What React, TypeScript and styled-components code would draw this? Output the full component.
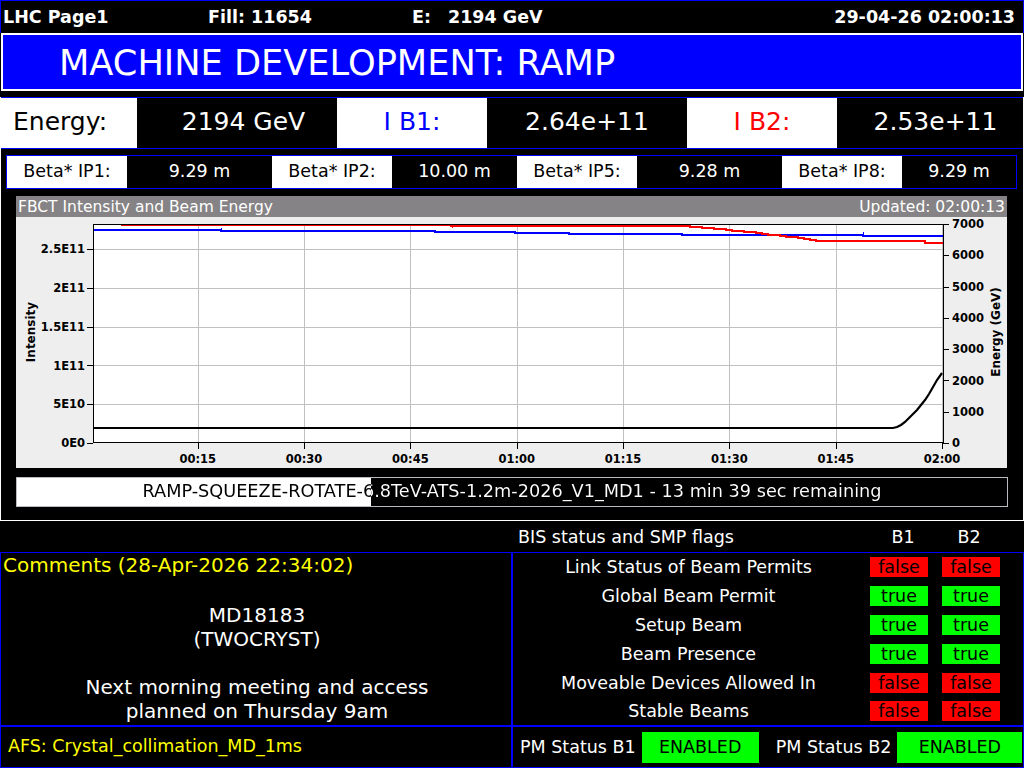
import React from "react";
import styled, { createGlobalStyle } from "styled-components";

const BLUE = "#0000ff";
const RED = "#ff0000";
const GREEN = "#00ff00";
const YELLOW = "#ffff00";

const GlobalStyle = createGlobalStyle`
  html, body { margin: 0; padding: 0; background: #000; }
  #root { width: 1024px; height: 768px; }
  *, *::before, *::after { box-sizing: border-box; }
`;

const Screen = styled.div`
  width: 1024px;
  height: 768px;
  overflow: hidden;
  background: #000;
  color: #fff;
  font-family: "DejaVu Sans", "Liberation Sans", sans-serif;
  font-size: 17.5px;
  display: flex;
  flex-direction: column;
  white-space: nowrap;
`;

/* ---------- top status line ---------- */
const TopBar = styled.header`
  flex: none;
  height: 33px;
  border: 1px solid ${BLUE};
  border-bottom: none;
  padding: 0 8px 0 2px;
  display: flex;
  align-items: center;
  font-weight: bold;
`;

const TopItem = styled.span<{ $w?: number }>`
  flex: none;
  width: ${(p) => (p.$w ? `${p.$w}px` : "auto")};
`;

const TopClock = styled.span`
  margin-left: auto;
`;

/* ---------- mode title ---------- */
const TitleBar = styled.h1`
  flex: none;
  margin: 0 1px 6px;
  height: 58px;
  border: 2px solid #fff;
  background: ${BLUE};
  display: flex;
  align-items: center;
  padding-left: 56px;
  font-size: 35.2px;
  font-weight: normal;
`;

/* ---------- main beam panel ---------- */
const MainPanel = styled.section`
  flex: none;
  height: 424px;
  border: 1px solid #fff;
  border-top: none;
  display: flex;
  flex-direction: column;
`;

const EnergyRow = styled.div`
  flex: none;
  height: 52px;
  border-top: 1px solid ${BLUE};
  border-bottom: 1px solid ${BLUE};
  display: flex;
  font-size: 25px;
`;

const EnergyCell = styled.div<{
  $w?: number;
  $light?: boolean;
  $color?: string;
  $left?: boolean;
  $pad?: number;
}>`
  flex: ${(p) => (p.$w ? `0 0 ${p.$w}px` : "1 1 auto")};
  background: ${(p) => (p.$light ? "#fff" : "#000")};
  color: ${(p) => p.$color ?? "#fff"};
  display: flex;
  align-items: center;
  justify-content: ${(p) => (p.$left ? "flex-start" : "center")};
  padding: 0 0 3px ${(p) => p.$pad ?? 0}px;
`;

const BetaRow = styled.div`
  flex: none;
  height: 34px;
  margin: 6px 6px 0 5px;
  border: 1px solid ${BLUE};
  display: flex;
`;

const BetaCell = styled.div<{ $w?: number; $light?: boolean }>`
  flex: ${(p) => (p.$w ? `0 0 ${p.$w}px` : "1 1 auto")};
  background: ${(p) => (p.$light ? "#fff" : "#000")};
  color: ${(p) => (p.$light ? "#000" : "#fff")};
  display: flex;
  align-items: center;
  justify-content: center;
  padding-bottom: 2px;
`;

const ChartPanel = styled.div`
  flex: none;
  width: 991px;
  height: 272px;
  margin: 7px 0 0 15px;
  background: #eeeeee;
  display: flex;
  flex-direction: column;
`;

const ChartHeader = styled.div`
  flex: none;
  height: 21px;
  background: #858385;
  color: #fff;
  font-size: 15.5px;
  display: flex;
  align-items: center;
  justify-content: space-between;
  padding: 0 2px;
`;

const ChartSvg = styled.svg`
  display: block;
  flex: none;
`;

/* sequence progress: white fill on black, text inverted across the fill edge */
const Progress = styled.div<{ $fill: number }>`
  flex: none;
  width: 992px;
  height: 30px;
  margin: 9px 0 0 15px;
  border: 1px solid #b8bcc0;
  background: linear-gradient(
    to right,
    #fff ${(p) => p.$fill}px,
    #000 ${(p) => p.$fill}px
  );
`;

const ProgressText = styled.div<{ $fill: number }>`
  width: 990px;
  height: 28px;
  line-height: 27px;
  text-align: center;
  font-size: 17.7px;
  color: transparent;
  background: linear-gradient(
    to right,
    #000 ${(p) => p.$fill}px,
    #fff ${(p) => p.$fill}px
  );
  -webkit-background-clip: text;
  background-clip: text;
`;

/* ---------- BIS / comments area ---------- */
const BisHeader = styled.div`
  flex: none;
  height: 31px;
  display: grid;
  grid-template-columns: 512px 1fr;
  align-items: center;
`;

const BisHeading = styled.div`
  display: flex;
  align-items: center;
  padding: 0 35px 0 6px;
`;

const BisHeadingTitle = styled.span`
  flex: 1;
`;

const BeamHead = styled.span`
  flex: none;
  width: 40px;
  text-align: center;
  & + & {
    margin-left: 26px;
  }
`;

const Lower = styled.div`
  flex: none;
  display: grid;
  grid-template-columns: 512px 512px;
  grid-template-rows: 174px 42px;
`;

const Box = styled.div`
  border: 1px solid ${BLUE};
`;

const CommentsBox = styled(Box)`
  padding-left: 2px;
  font-size: 20px;
  line-height: 24px;
`;

const CommentsTitle = styled.div`
  color: ${YELLOW};
`;

const CommentsBody = styled.div`
  margin-top: 26px;
  text-align: center;
  white-space: pre;
`;

const BisBox = styled(Box)`
  display: grid;
  grid-template-rows: repeat(6, 28.8px);
`;

const BisRow = styled.div`
  display: flex;
  align-items: center;
`;

const BisLabel = styled.span`
  flex: none;
  width: 351px;
  text-align: center;
`;

const Flag = styled.span<{ $on: boolean }>`
  flex: none;
  width: 58px;
  height: 20px;
  margin-left: 6px;
  background: ${(p) => (p.$on ? GREEN : RED)};
  color: #000;
  line-height: 20px;
  text-align: center;
  & + & {
    margin-left: 14px;
  }
`;

const AfsBox = styled(Box)`
  display: flex;
  align-items: center;
  padding: 0 0 3px 7px;
  color: ${YELLOW};
`;

const PmBox = styled(Box)`
  display: flex;
  align-items: center;
  padding-left: 7px;
`;

const PmLabel = styled.span<{ $gap?: number }>`
  flex: none;
  margin: 0 6px 0 ${(p) => p.$gap ?? 0}px;
`;

const PmState = styled.span<{ $w: number }>`
  flex: none;
  width: ${(p) => p.$w}px;
  height: 31px;
  background: ${GREEN};
  color: #000;
  display: flex;
  align-items: center;
  justify-content: center;
`;

/* ---------- chart data ---------- */
const PLOT = { l: 93, r: 943, t: 224, b: 443 };
const timeTicks = ["00:15", "00:30", "00:45", "01:00", "01:15", "01:30", "01:45", "02:00"].map(
  (label, i) => ({ label, x: 197.7 + i * 106.33 })
);
const intensityTicks: { label: string; v: number }[] = [
  { label: "2.5E11", v: 2.5e11 },
  { label: "2E11", v: 2e11 },
  { label: "1.5E11", v: 1.5e11 },
  { label: "1E11", v: 1e11 },
  { label: "5E10", v: 5e10 },
  { label: "0E0", v: 0 },
];
const yIntensity = (v: number) => PLOT.b - (v / 5e10) * 38.8;
const yEnergy = (gev: number) => PLOT.b - (gev * (PLOT.b - PLOT.t)) / 7000;
const energyTicks = [0, 1000, 2000, 3000, 4000, 5000, 6000, 7000];

const pts = (list: number[][]) => list.map(([x, y]) => `${x},${y}`).join(" ");

const beam1 = pts([
  [93, 230], [221, 230], [221, 231], [435, 231], [435, 232], [515, 232], [515, 233],
  [569, 233], [569, 234], [682, 234], [682, 235], [863, 235], [863, 236], [943, 236],
]);

const beam2 = (() => {
  const list: number[][] = [[121, 225], [451, 225], [451, 226], [678, 226]];
  let prev = 226;
  for (let x = 684; x <= 823; x += 6) {
    const f = (x - 678) / 145;
    const y = Math.round(226 + 15.5 * Math.pow(f, 1.25));
    list.push([x, prev], [x, y]);
    prev = y;
  }
  list.push([925, prev], [925, 243], [943, 243]);
  return pts(list);
})();

const energyTrace = pts([
  [93, 428], [893, 428], [897, 427], [901, 425], [905, 422], [909, 418], [913, 414],
  [917, 410], [921, 405], [925, 400], [929, 394], [933, 387], [937, 380], [942, 373],
]);

const axisFont = {
  fontFamily: '"DejaVu Sans", sans-serif',
  fontSize: 11.5,
  fontWeight: 700,
  fill: "#000",
} as const;

const crisp = (n: number) => Math.round(n) + 0.5;

function IntensityChart() {
  return (
    <ChartSvg width={991} height={251} viewBox="16 217 991 251">
      <rect x={PLOT.l} y={PLOT.t} width={PLOT.r - PLOT.l} height={PLOT.b - PLOT.t} fill="#fff" />
      <g stroke="#c0c0c0" strokeWidth={1} shapeRendering="crispEdges">
        {timeTicks.map((t) => (
          <line key={t.label} x1={crisp(t.x)} x2={crisp(t.x)} y1={PLOT.t} y2={PLOT.b} />
        ))}
        {intensityTicks.slice(0, 5).map((t) => (
          <line key={t.label} x1={PLOT.l} x2={PLOT.r} y1={crisp(yIntensity(t.v))} y2={crisp(yIntensity(t.v))} />
        ))}
      </g>
      <g fill="none" strokeWidth={2} shapeRendering="crispEdges">
        <polyline points={beam1} stroke={BLUE} />
        <polyline points={beam2} stroke={RED} />
        <line x1={221} x2={221} y1={228} y2={232} stroke={BLUE} strokeWidth={1} />
        <line x1={863} x2={863} y1={232} y2={236} stroke={BLUE} strokeWidth={1} />
        <line x1={452} x2={452} y1={225} y2={228} stroke={RED} strokeWidth={1} />
      </g>
      <polyline points={energyTrace} fill="none" stroke="#000" strokeWidth={2.2} />
      <g stroke="#000" strokeWidth={1} shapeRendering="crispEdges" fill="none">
        <rect x={PLOT.l + 0.5} y={PLOT.t + 0.5} width={PLOT.r - PLOT.l} height={PLOT.b - PLOT.t - 1} />
        {intensityTicks.map((t) => (
          <line key={t.label} x1={87} x2={PLOT.l} y1={crisp(yIntensity(t.v))} y2={crisp(yIntensity(t.v))} />
        ))}
        {timeTicks.map((t) => (
          <line key={t.label} x1={crisp(t.x)} x2={crisp(t.x)} y1={PLOT.b} y2={PLOT.b + 6} />
        ))}
        {energyTicks.map((v) => (
          <line key={v} x1={PLOT.r} x2={PLOT.r + 6} y1={crisp(yEnergy(v))} y2={crisp(yEnergy(v))} />
        ))}
      </g>
      {intensityTicks.map((t) => (
        <text key={t.label} x={85} y={yIntensity(t.v) + 4.2} textAnchor="end" {...axisFont}>
          {t.label}
        </text>
      ))}
      {timeTicks.map((t) => (
        <text key={t.label} x={t.x} y={463} textAnchor="middle" {...axisFont}>
          {t.label}
        </text>
      ))}
      {energyTicks.map((v) => (
        <text key={v} x={952} y={yEnergy(v) + 4.2} {...axisFont}>
          {v}
        </text>
      ))}
      <text transform="translate(34.5 332) rotate(-90)" textAnchor="middle" {...axisFont} fontSize={12}>
        Intensity
      </text>
      <text transform="translate(1000 332) rotate(-90)" textAnchor="middle" {...axisFont} fontSize={12}>
        Energy (GeV)
      </text>
    </ChartSvg>
  );
}

const flags: { label: string; b1: boolean; b2: boolean }[] = [
  { label: "Link Status of Beam Permits", b1: false, b2: false },
  { label: "Global Beam Permit", b1: true, b2: true },
  { label: "Setup Beam", b1: true, b2: true },
  { label: "Beam Presence", b1: true, b2: true },
  { label: "Moveable Devices Allowed In", b1: false, b2: false },
  { label: "Stable Beams", b1: false, b2: false },
];

const betas = [
  { ip: "IP1", value: "9.29 m", w: 145 },
  { ip: "IP2", value: "10.00 m", w: 125 },
  { ip: "IP5", value: "9.28 m", w: 145 },
  { ip: "IP8", value: "9.29 m", w: 0 },
];

const sequence = "RAMP-SQUEEZE-ROTATE-6.8TeV-ATS-1.2m-2026_V1_MD1 - 13 min 39 sec remaining";
const sequenceDone = 0.358;
const sequenceFill = Math.round(sequenceDone * 990);

export default function App() {
  return (
    <Screen>
      <GlobalStyle />
      <TopBar>
        <TopItem $w={205}>LHC Page1</TopItem>
        <TopItem $w={204}>Fill: 11654</TopItem>
        <TopItem $w={36}>E:</TopItem>
        <TopItem>2194 GeV</TopItem>
        <TopClock>29-04-26 02:00:13</TopClock>
      </TopBar>

      <TitleBar>MACHINE DEVELOPMENT: RAMP</TitleBar>

      <MainPanel>
        <EnergyRow>
          <EnergyCell $w={136} $light $color="#000" $left $pad={12}>
            Energy:
          </EnergyCell>
          <EnergyCell $w={200} $pad={13}>
            2194 GeV
          </EnergyCell>
          <EnergyCell $w={150} $light $color={BLUE}>
            I B1:
          </EnergyCell>
          <EnergyCell $w={200}>2.64e+11</EnergyCell>
          <EnergyCell $w={150} $light $color={RED}>
            I B2:
          </EnergyCell>
          <EnergyCell $pad={11}>2.53e+11</EnergyCell>
        </EnergyRow>

        <BetaRow>
          {betas.map((b) => (
            <React.Fragment key={b.ip}>
              <BetaCell $w={120} $light>
                Beta* {b.ip}:
              </BetaCell>
              <BetaCell $w={b.w || undefined}>{b.value}</BetaCell>
            </React.Fragment>
          ))}
        </BetaRow>

        <ChartPanel>
          <ChartHeader>
            <span>FBCT Intensity and Beam Energy</span>
            <span>Updated: 02:00:13</span>
          </ChartHeader>
          <IntensityChart />
        </ChartPanel>

        <Progress $fill={sequenceFill}>
          <ProgressText $fill={sequenceFill}>{sequence}</ProgressText>
        </Progress>
      </MainPanel>

      <BisHeader>
        <span />
        <BisHeading>
          <BisHeadingTitle>BIS status and SMP flags</BisHeadingTitle>
          <BeamHead>B1</BeamHead>
          <BeamHead>B2</BeamHead>
        </BisHeading>
      </BisHeader>

      <Lower>
        <CommentsBox>
          <CommentsTitle>Comments (28-Apr-2026 22:34:02)</CommentsTitle>
          <CommentsBody>
            {"MD18183\n(TWOCRYST)\n\nNext morning meeting and access\nplanned on Thursday 9am"}
          </CommentsBody>
        </CommentsBox>
        <BisBox>
          {flags.map((f) => (
            <BisRow key={f.label}>
              <BisLabel>{f.label}</BisLabel>
              <Flag $on={f.b1}>{f.b1 ? "true" : "false"}</Flag>
              <Flag $on={f.b2}>{f.b2 ? "true" : "false"}</Flag>
            </BisRow>
          ))}
        </BisBox>
        <AfsBox>AFS: Crystal_collimation_MD_1ms</AfsBox>
        <PmBox>
          <PmLabel>PM Status B1</PmLabel>
          <PmState $w={117}>ENABLED</PmState>
          <PmLabel $gap={17}>PM Status B2</PmLabel>
          <PmState $w={125}>ENABLED</PmState>
        </PmBox>
      </Lower>
    </Screen>
  );
}
